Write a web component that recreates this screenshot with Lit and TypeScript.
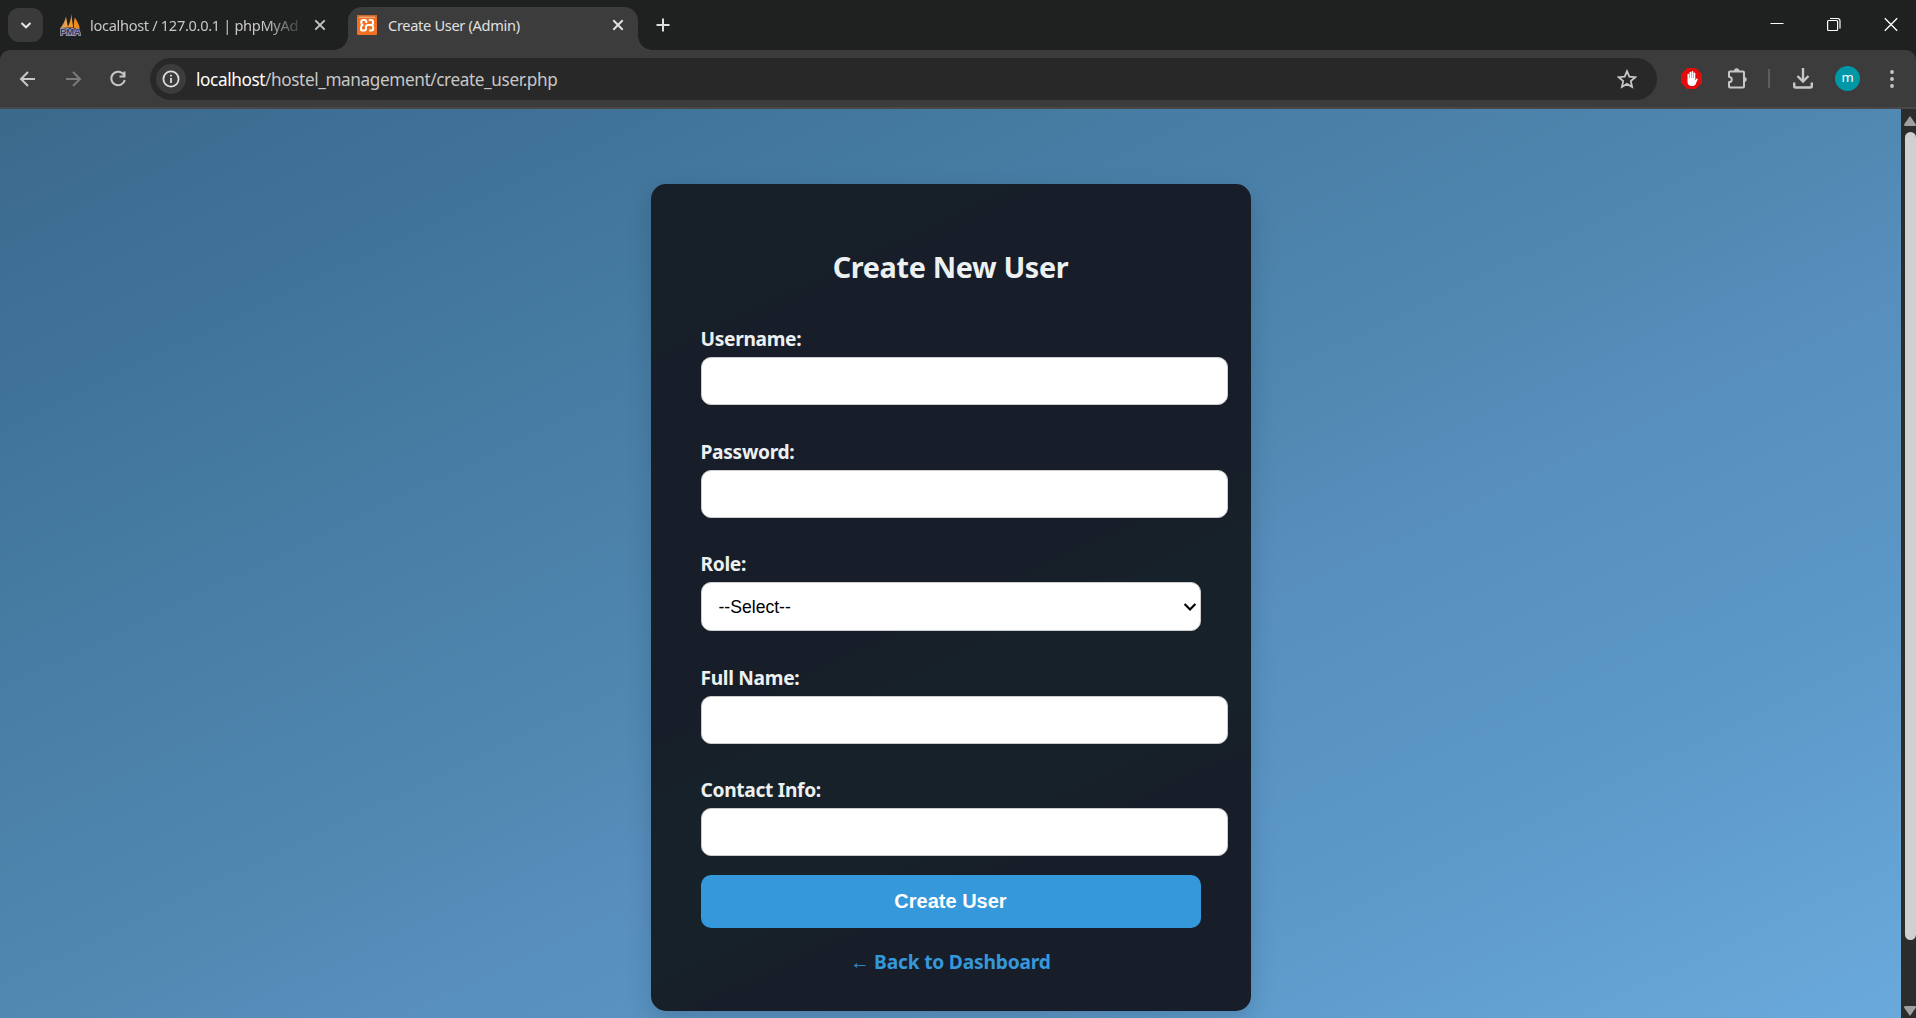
import { LitElement, html, css, svg } from "lit";
import { customElement } from "lit/decorators.js";

const stroke = (d: string, size = 20, w = 2) => html`<svg class="ico" width=${size} height=${size} viewBox="0 0 20 20" fill="none" stroke="currentColor" stroke-width=${w}>${svg`<path d=${d}></path>`}</svg>`;

@customElement("browser-chrome")
class BrowserChrome extends LitElement {
  static styles = css`
    :host { display: block; height: 109px; box-sizing: border-box; background: #3c3c3c; color: #c7c7c7; font-family: "Noto Sans", sans-serif; border-bottom: 2px solid #484848; }
    .ico { display: block; flex: none; }
    .tabs { height: 50px; background: #1f2020; display: flex; align-items: flex-start; }
    .menu { margin: 8px 0 0 8px; width: 35px; height: 34px; border-radius: 11px; background: #3a3a3a; display: grid; place-items: center; color: #e6e6e6; }
    .tab { height: 50px; display: flex; align-items: center; box-sizing: border-box; font-size: 14.6px; letter-spacing: -0.32px; }
    .idle { width: 305px; padding: 0 0 0 17px; }
    .idle .label { width: 212px; margin-left: 9px; white-space: nowrap; -webkit-mask-image: linear-gradient(90deg, #000 176px, rgba(0, 0, 0, .2) 209px); mask-image: linear-gradient(90deg, #000 176px, rgba(0, 0, 0, .2) 209px); }
    .x { margin-left: 8px; }
    .active { position: relative; margin-top: 7px; height: 43px; width: 290px; background: #3c3c3c; border-radius: 14px 14px 0 0; padding: 0 10px 8px 9px; color: #e0e0e0; }
    .active::before, .active::after { content: ""; position: absolute; bottom: 0; width: 14px; height: 14px; }
    .active::before { left: -14px; background: radial-gradient(circle at 0 0, #1f2020 13.5px, #3c3c3c 14px); }
    .active::after { right: -14px; background: radial-gradient(circle at 100% 0, #1f2020 13.5px, #3c3c3c 14px); }
    .active .label { margin-left: 11px; flex: 1; }
    .active .x { margin: 0; }
    .plus { margin: 18px 0 0 18px; }
    .wins { margin-left: auto; display: flex; gap: 43px; padding: 17px 18px 0 0; color: #fff; }
    .bar { height: 57px; display: flex; align-items: center; box-sizing: border-box; padding: 0 14px 0 18px; background: #3c3c3c; border-radius: 10px 10px 0 0; }
    .rail { background: #1f2020; }
    .nav { display: flex; gap: 25px; }
    .dim { color: #7b7b7b; }
    .url { flex: 1; margin-left: 22px; height: 42px; border-radius: 21px; background: #282828; display: flex; align-items: center; padding: 0 20px 0 6px; font-size: 17.2px; }
    .info { width: 30px; height: 30px; border-radius: 50%; background: #3c3c3c; display: grid; place-items: center; margin-right: 10px; }
    .host { color: #fff; }
    .addr { flex: 1; letter-spacing: -0.4px; padding-top: 2px; }
    .ext { display: flex; align-items: center; margin-left: 24px; }
    .puzzle { margin-left: 24px; }
    .sep { width: 2px; height: 19px; background: #5e5e5e; margin: 0 23px 0 20px; }
    .avatar { width: 25px; height: 25px; border-radius: 50%; background: #0097a7; color: #fff; font-size: 13px; line-height: 23px; text-align: center; margin: 0 22px; }
  `;
  render() {
    return html`
      <div class="tabs">
        <div class="menu">${stroke("M5.500 8l4.500 4.300L14.500 8", 20, 2)}</div>
        <div class="tab idle">
          <svg class="ico" width="21" height="22" viewBox="0 0 21 22">
            <path d="M.5 14C3 11 5 7 6 2.500l2 11z" fill="#e8a050"/><path d="M7.500 13.500C10 9 11 5 11.200 0l2 13.500z" fill="#f39a2e"/><path d="M14 14c-.5-4 0-7 .8-10.500 2.200 3 4.200 7 5 11z" fill="#ef8a1c"/>
            <text x="0" y="20.500" font-family="Liberation Sans" font-weight="bold" font-size="8.500" textLength="20.500" lengthAdjust="spacingAndGlyphs" fill="#34376a" stroke="#a8aac8" stroke-width="1.400" paint-order="stroke">PMA</text>
          </svg>
          <span class="label">localhost / 127.0.0.1 | phpMyAd</span>
          <span class="x">${stroke("M5.300 5.300l9.400 9.400M14.700 5.300l-9.400 9.400", 20, 1.9)}</span>
        </div>
        <div class="tab active">
          <svg class="ico" width="20" height="20" viewBox="0 0 20 20"><rect width="20" height="20" rx="1" fill="#f17022"/><rect width="20" height="2" fill="#c9652f"/><rect x="2" y="1.500" width="16" height="1.500" fill="#f6a573"/>
            <path d="M9.300 8V6.600Q9.300 4.900 7.500 4.900H6Q4.300 4.900 4.300 6.700v1.200Q4.300 9.300 5.700 10.100 4 10.800 4 12.500v1.400q0 1.600 1.700 1.600h1.500Q9 15.500 9 13.600V12q0-2 2-2h3.500M11.800 4.900h2.600q1.600 0 1.600 1.700v1.600q0 1.300-1.500 1.800 1.700.6 1.700 2.300v1.500q0 1.700-1.800 1.700h-2.200" fill="none" stroke="#fff" stroke-width="2" stroke-linejoin="round"/></svg>
          <span class="label">Create User (Admin)</span>
          <span class="x">${stroke("M5.300 5.300l9.400 9.400M14.700 5.300l-9.400 9.400", 20, 2)}</span>
        </div>
        <svg class="ico plus" width="14" height="14" viewBox="0 0 14 14" stroke="#ddd" stroke-width="2"><path d="M7 .5v13M.5 7h13"/></svg>
        <div class="wins">
          <svg class="ico" width="14" height="15" viewBox="0 0 14 15" stroke="currentColor" fill="none"><path d="M.5 6.500h13"/></svg>
          <svg class="ico" width="14" height="15" viewBox="0 0 14 15" stroke="currentColor" fill="none" stroke-width="1.200"><rect x=".6" y="3.500" width="10" height="10" rx="1"/><path d="M3 1.500h7.500q2.500 0 2.500 2.500v7.500"/></svg>
          <svg class="ico" width="14" height="15" viewBox="0 0 14 15" stroke="currentColor" fill="none" stroke-width="1.300"><path d="M.8 1.300l12.400 12.400M13.200 1.300L.8 13.700"/></svg>
        </div>
      </div>
      <div class="rail"><div class="bar">
        <div class="nav">
          ${stroke("M17 10H3.500M10 3L3 10l7 7")}
          <span class="dim">${stroke("M3 10h13.500M10 3l7 7-7 7")}</span>
          ${stroke("M16 6A6.800 6.800 0 1 0 16.800 11M16.500 2.500v5h-5")}
        </div>
        <div class="url">
          <span class="info"><svg class="ico" width="18" height="18" viewBox="0 0 18 18" fill="none" stroke="#ddd" stroke-width="1.800"><circle cx="9" cy="9" r="7.600"/><path d="M9 8v5M9 4.700v1.900"/></svg></span>
          <span class="addr"><span class="host">localhost</span>/hostel_management/create_user.php</span>
          <svg class="ico" width="20" height="20" viewBox="0 0 20 20" fill="none" stroke="currentColor" stroke-width="1.800"><path d="M10 2.200l2.300 5.500 6 .5-4.500 3.900 1.300 5.900L10 14.900l-5.100 3.100 1.300-5.900L1.700 8.200l6-.5z"/></svg>
        </div>
        <div class="ext">
          <svg class="ico" width="21" height="21" viewBox="0 0 21 21"><path d="M6.200 0h8.600L21 6.200v8.600L14.800 21H6.200L0 14.800V6.200z" fill="#e40d0d"/><path d="M6.500 13.500V6.200q.9-1 1.600 0V10h.4V4.200q.9-1 1.700 0V10h.4V3.500q.9-1 1.700 0V10h.4V5q.9-1 1.600 0v7.500l1.300-2q1.300-.4 1.200.6l-2.300 5.400Q13.300 18 11 18q-4.500 0-4.500-4.500z" fill="#fff"/></svg>
          <svg class="ico puzzle" width="22" height="22" viewBox="0 0 22 22"><path d="M3 4.500q0-1 1-1h13q1 0 1 1v14q0 1-1 1H4q-1 0-1-1v-4.200q2.800-.3 2.800-2.800T3 8.700z" fill="none" stroke="currentColor" stroke-width="2"/><path d="M8 3a2.700 2.700 0 0 1 5.400 0zM18.500 8.700a2.800 2.800 0 0 1 0 5.500z" fill="currentColor"/></svg>
          <span class="sep"></span>
          <svg class="ico" width="20" height="21" viewBox="0 0 20 21" fill="none" stroke="currentColor" stroke-width="2.400"><path d="M10 0v13M4.500 8l5.500 5.500L15.500 8M1.200 14.500v3.500q0 1.500 1.500 1.500h14.600q1.500 0 1.500-1.500v-3.500"/></svg>
          <span class="avatar">m</span>
          <svg class="ico" width="20" height="20" viewBox="0 0 20 20" fill="currentColor"><circle cx="10" cy="3" r="1.900"/><circle cx="10" cy="10" r="1.900"/><circle cx="10" cy="17" r="1.900"/></svg>
        </div>
      </div></div>`;
  }
}

@customElement("app-root")
class AppRoot extends LitElement {
  static styles = css`
    :host { display: flex; flex-direction: column; height: 1018px; overflow: hidden; }
    .view { flex: 1; min-height: 0; display: flex; }
    .page { flex: 1; display: flex; justify-content: center; align-items: flex-start; padding-top: 75px; background: linear-gradient(to bottom right, #3b698c 0%, #3f7096 12%, #43779d 22%, #4a80a8 36%, #5088b1 50%, #578ebd 59%, #5892c0 65%, #5c98c8 78%, #64a2d3 90%, #6aa9dc 100%); font-family: "Noto Sans", sans-serif; }
    .card { width: 600px; height: 827px; box-sizing: border-box; padding: 66px 50px 0; border-radius: 15px; background: linear-gradient(155deg, #172028 12%, #171e29 17%, #171e29 50%, #172129 56%, #172129 72%, #181e29 77%); box-shadow: 0 8px 25px rgba(0, 0, 0, .15); color: #ecf0f1; }
    h2 { margin: 0 0 42px; font-size: 28.8px; line-height: 34px; font-weight: 700; text-align: center; letter-spacing: -0.35px; }
    .field { height: 112.6px; }
    .role { height: 113.6px; }
    label { display: block; height: 25px; line-height: 25px; font-size: 19.2px; font-weight: 700; letter-spacing: -0.32px; margin-bottom: 6px; }
    input, select { display: block; box-sizing: border-box; height: 48px; border: 1px solid #ccc; border-radius: 10px; background: #fff; padding: 0 13px; font: 17.6px "Liberation Sans", sans-serif; color: #000; }
    input { width: 527.6px; }
    .pick { display: grid; width: 500px; align-items: center; }
    .pick > * { grid-area: 1 / 1; }
    select { width: 500px; height: 49px; appearance: none; padding-left: 17px; }
    .caret { justify-self: end; margin-right: 4px; pointer-events: none; }
    button { display: block; width: 500px; height: 53px; margin-top: -15px; border: 0; border-radius: 10px; background: #3498db; color: #fff; font: 700 20px "Liberation Sans", sans-serif; }
    .back { display: block; margin-top: 21px; text-align: center; font-size: 19.2px; line-height: 26px; font-weight: 700; letter-spacing: -0.2px; color: #3498db; text-decoration: none; }
    .scroll { width: 15px; background: #2c2c2c; display: flex; flex-direction: column; align-items: flex-end; box-sizing: border-box; padding: 7px 0 2px; overflow: hidden; }
    .arrow { display: block; width: 12px; height: 10px; }
    .thumb { flex: 1; width: 11px; margin: 6px 0 66px; background: #d0d0d0; border-radius: 6px; }
  `;
  render() {
    const field = (name: string, type = "text") => html`<div class="field"><label>${name}:</label><input type=${type} /></div>`;
    return html`
      <browser-chrome></browser-chrome>
      <div class="view">
        <div class="page">
          <div class="card">
            <h2>Create New User</h2>
            ${field("Username")}
            ${field("Password", "password")}
            <div class="field role"><label>Role:</label><div class="pick"><select><option>--Select--</option></select>
              <svg class="caret" width="14" height="10" viewBox="0 0 14 10" fill="none" stroke="#000" stroke-width="2.2"><path d="M1.600 2L7 7.500 12.400 2"/></svg></div></div>
            ${field("Full Name")}
            ${field("Contact Info")}
            <button>Create User</button>
            <a class="back">← Back to Dashboard</a>
          </div>
        </div>
        <div class="scroll">
          <svg class="arrow" viewBox="0 0 12 10"><path d="M6 0l6 8.500q0 1.500-1 1.500H1Q0 10 0 8.500z" fill="#9f9f9f"/></svg>
          <div class="thumb"></div>
          <svg class="arrow" viewBox="0 0 12 10"><path d="M6 10L0 1.500Q0 0 1 0h10q1 0 1 1.500z" fill="#9f9f9f"/></svg>
        </div>
      </div>`;
  }
}
